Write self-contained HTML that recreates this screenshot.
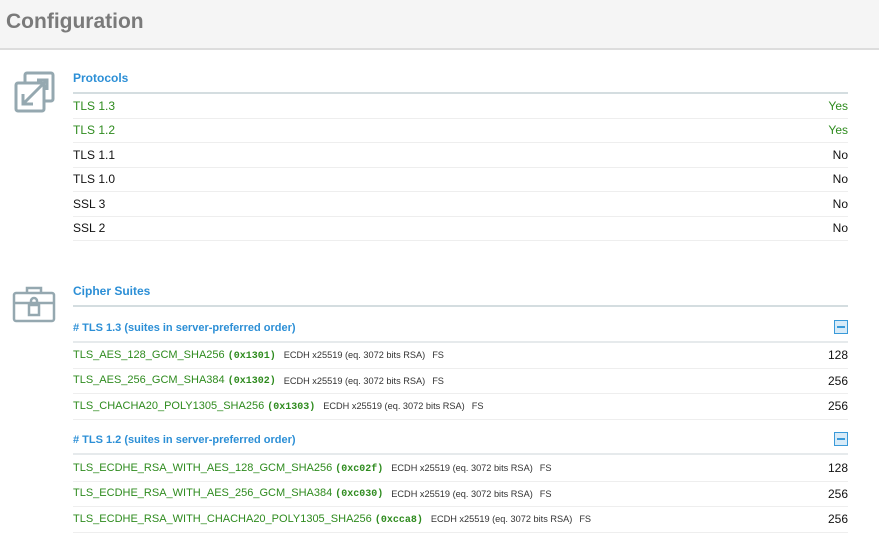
<!DOCTYPE html>
<html><head><style>
body{margin:0;width:879px;height:552px;background:#fff;font-family:"Liberation Sans",sans-serif;position:relative;overflow:hidden}
.hdr{position:absolute;left:0;top:0;width:879px;height:48px;background:#f5f5f5;border-bottom:2px solid #ddd}
.hdr h1{margin:0;position:absolute;left:6px;top:10px;font-size:21px;color:#7a7a7a;font-weight:bold}
.t{position:absolute;left:73px;width:775px;font-size:12px;color:#2c8fd6;font-weight:bold;border-bottom:2px solid #d4dde0}
.r{position:absolute;left:73px;width:775px;font-size:12px;border-bottom:1px solid #eee;color:#111;display:flex;align-items:center;box-sizing:border-box}
.c{font-size:11px}
.c .v{font-size:12px}
.r .v{margin-left:auto}
.g{color:#2e8b1e}
.m{font-family:"Liberation Mono",monospace;font-size:10px;font-weight:bold}
.s{font-size:9.2px;color:#333;margin-left:8px}
.fs{font-size:9.2px;color:#333;margin-left:7px}
.sh{position:absolute;left:73px;width:775px;font-size:11px;color:#2c8fd6;font-weight:bold;border-bottom:2px solid #e6eaec;box-sizing:border-box}
.mn{position:absolute;right:0;top:-2px;width:12px;height:12px;border:1px solid #3a9ad9;background:#d8ebf8}
.mn:after{content:"";position:absolute;left:2px;top:5px;width:8px;height:2px;background:#3a9ad9}
</style></head><body>
<div class="hdr"><h1>Configuration</h1></div>
<svg style="position:absolute;left:13px;top:70px" width="44" height="44" viewBox="0 0 44 44" fill="none" stroke="#95a8b0" stroke-width="3">
<rect x="12" y="3" width="28" height="28" rx="2"/><rect x="3" y="13" width="28" height="28" rx="2" fill="#fff"/>
<path d="M10 34 L34 10 M24 10 H34 V20 M10 24 V34 H20"/></svg>
<svg style="position:absolute;left:12px;top:285px" width="45" height="38" viewBox="0 0 45 38" fill="none" stroke="#95a8b0" stroke-width="2.5">
<rect x="2" y="8" width="40" height="28" rx="2"/><path d="M15 8 V3 H29 V8 M2 18 H42"/>
<rect x="17" y="20" width="10" height="10" fill="#fff"/><path d="M19 20 V16 a3 3 0 0 1 6 0 V20"/></svg>
<div class="t" style="top:71px;height:21px">Protocols</div>
<div class="r g" style="top:94px;height:24.5px">TLS 1.3<span class="v">Yes</span></div>
<div class="r g" style="top:118.5px;height:24.5px">TLS 1.2<span class="v">Yes</span></div>
<div class="r" style="top:143px;height:24.5px">TLS 1.1<span class="v">No</span></div>
<div class="r" style="top:167.5px;height:24.5px">TLS 1.0<span class="v">No</span></div>
<div class="r" style="top:192px;height:24.5px">SSL 3<span class="v">No</span></div>
<div class="r" style="top:216.5px;height:24.5px">SSL 2<span class="v">No</span></div>
<div class="t" style="top:284px;height:21px">Cipher Suites</div>
<div class="sh" style="top:322px;height:21px"># TLS 1.3 (suites in server-preferred order)<span class="mn"></span></div>
<div class="r c" style="top:343px;height:25.5px"><span class="g">TLS_AES_128_GCM_SHA256 <span class="m">(0x1301)</span></span><span class="s">ECDH x25519 (eq. 3072 bits RSA)</span><span class="fs">FS</span><span class="v">128</span></div>
<div class="r c" style="top:368.5px;height:25.5px"><span class="g">TLS_AES_256_GCM_SHA384 <span class="m">(0x1302)</span></span><span class="s">ECDH x25519 (eq. 3072 bits RSA)</span><span class="fs">FS</span><span class="v">256</span></div>
<div class="r c" style="top:394px;height:25.5px"><span class="g">TLS_CHACHA20_POLY1305_SHA256 <span class="m">(0x1303)</span></span><span class="s">ECDH x25519 (eq. 3072 bits RSA)</span><span class="fs">FS</span><span class="v">256</span></div>
<div class="sh" style="top:434px;height:21px"># TLS 1.2 (suites in server-preferred order)<span class="mn"></span></div>
<div class="r c" style="top:456px;height:25.5px"><span class="g">TLS_ECDHE_RSA_WITH_AES_128_GCM_SHA256 <span class="m">(0xc02f)</span></span><span class="s">ECDH x25519 (eq. 3072 bits RSA)</span><span class="fs">FS</span><span class="v">128</span></div>
<div class="r c" style="top:481.5px;height:25.5px"><span class="g">TLS_ECDHE_RSA_WITH_AES_256_GCM_SHA384 <span class="m">(0xc030)</span></span><span class="s">ECDH x25519 (eq. 3072 bits RSA)</span><span class="fs">FS</span><span class="v">256</span></div>
<div class="r c" style="top:507px;height:25.5px"><span class="g">TLS_ECDHE_RSA_WITH_CHACHA20_POLY1305_SHA256 <span class="m">(0xcca8)</span></span><span class="s">ECDH x25519 (eq. 3072 bits RSA)</span><span class="fs">FS</span><span class="v">256</span></div>
</body></html>
